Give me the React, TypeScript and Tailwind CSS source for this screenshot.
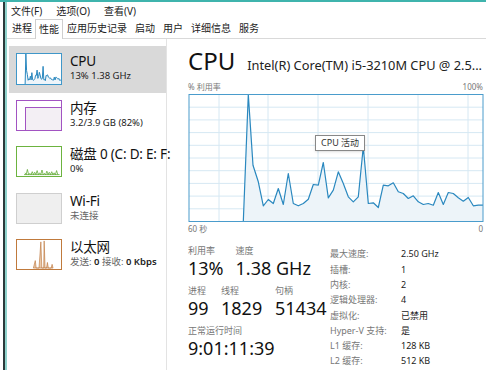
import React from "react";

const font = {
  fontFamily: '"Noto Sans", "Noto Sans CJK SC", sans-serif',
};

// CPU usage samples traced from the graph, in a 294x127 box
const cpuPoints: [number, number][] = [
  [54.3, 127], [59.3, 0], [64, 70.7], [69.3, 87.3], [74.3, 111.3], [79.3, 105],
  [84.3, 109], [89.3, 94], [94.3, 110], [99.3, 79], [104.3, 109], [109.3, 111.3],
  [114.3, 109], [119.3, 104.7], [124.3, 90], [129.3, 90.7], [134.3, 68],
  [139.3, 103.3], [144.3, 95.7], [149.3, 77.3], [154.3, 89], [159.3, 102.3],
  [164.3, 107.3], [169.3, 102.3], [174.3, 52.3], [179.3, 109], [184.3, 108.3],
  [189.3, 113], [194.3, 90.7], [199.3, 91.3], [204.3, 88.3], [209.3, 97.3],
  [214.3, 99], [219.3, 104], [224.3, 101.3], [229.3, 107.3], [234.3, 110],
  [239.3, 109], [244.3, 110.7], [249.3, 98], [254.3, 110], [259.3, 98],
  [264.3, 99], [269.3, 103.3], [274.3, 106.7], [279.3, 103], [284.3, 111.3],
  [289.3, 110.7], [294, 110.7],
];

const line = cpuPoints.map((p) => p.join(",")).join(" ");
const area = `${line} 294,127 54.3,127`;

function CpuThumb() {
  return (
    <svg width="46" height="32" viewBox="0 0 294 127" preserveAspectRatio="none" className="bg-white border border-[#3f97c9]">
      <polygon points={area} fill="#eef5fa" />
      <polyline points={line} fill="none" stroke="#2a88bf" strokeWidth="1" vectorEffect="non-scaling-stroke" />
    </svg>
  );
}

function MemThumb() {
  return (
    <div className="w-[46px] h-[31px] border border-[#a253c2] bg-white flex flex-col justify-end">
      <div className="ml-[8px] h-[23px] border-t border-l border-[#a253c2] bg-[#f3eff4]" />
    </div>
  );
}

function DiskThumb() {
  const bars = [4, 10, 3, 6, 5, 8, 4, 9, 3, 7, 5, 6, 4, 8];
  return (
    <svg width="46" height="31" viewBox="0 0 46 31" className="border border-[#6cb33f] bg-white">
      <polyline
        points={bars.map((b, i) => `${8 + i * 2.6},${30 - b * 0.6} ${9.3 + i * 2.6},29.5`).join(" ")}
        fill="none"
        stroke="#5aa62c"
        strokeWidth="0.8"
      />
      <line x1="7" y1="29.5" x2="45" y2="29.5" stroke="#5aa62c" strokeWidth="0.8" />
    </svg>
  );
}

function WifiThumb() {
  return <div className="w-[46px] h-[31px] border border-[#cfcfcf] bg-[#efefef]" />;
}

function EthThumb() {
  return (
    <svg width="46" height="31" viewBox="0 0 46 31" className="border border-[#c07a3c] bg-white">
      <polygon
        points="17,30 19,22 20,30 23,30 25,2 26,30 28,30 28.5,1 29.5,30 31,30 32,24 33,30 36,30 37,26 38,30"
        fill="#e9c9ab"
        stroke="#b86a2a"
        strokeWidth="0.6"
      />
    </svg>
  );
}

type Item = { thumb: React.ReactNode; title: string; sub: React.ReactNode; selected?: boolean };

const items: Item[] = [
  { thumb: <CpuThumb />, title: "CPU", sub: "13% 1.38 GHz", selected: true },
  { thumb: <MemThumb />, title: "内存", sub: "3.2/3.9 GB (82%)" },
  { thumb: <DiskThumb />, title: "磁盘 0 (C: D: E: F:", sub: "0%" },
  { thumb: <WifiThumb />, title: "Wi-Fi", sub: <span className="text-[#666]">未连接</span> },
  {
    thumb: <EthThumb />,
    title: "以太网",
    sub: (
      <span className="text-[#666]">
        发送: <b className="text-[#222] font-semibold">0</b> 接收: <b className="text-[#222] font-semibold">0 Kbps</b>
      </span>
    ),
  },
];

const specs: [string, string][] = [
  ["最大速度:", "2.50 GHz"],
  ["插槽:", "1"],
  ["内核:", "2"],
  ["逻辑处理器:", "4"],
  ["虚拟化:", "已禁用"],
  ["Hyper-V 支持:", "是"],
  ["L1 缓存:", "128 KB"],
  ["L2 缓存:", "512 KB"],
];

function Graph() {
  const rows = Array.from({ length: 9 }, (_, i) => (i + 1) * 12.7);
  const cols = [30, 79, 129, 179, 229, 279];
  return (
    <svg width="296" height="128" viewBox="-1 -0.5 296 128" className="block">
      {rows.map((y) => (
        <line key={y} x1="0" y1={y} x2="294" y2={y} stroke="#d6e8f3" strokeWidth="1" />
      ))}
      {cols.map((x) => (
        <line key={x} x1={x} y1="0" x2={x} y2="127" stroke="#d6e8f3" strokeWidth="1" />
      ))}
      <polygon points={area} fill="#edf4f9" />
      <polyline points={line} fill="none" stroke="#2a88bf" strokeWidth="1.2" strokeLinejoin="round" />
      <rect x="0" y="0" width="294" height="127" fill="none" stroke="#4a9ccc" strokeWidth="1" />
    </svg>
  );
}

function Stat({ label, value, w }: { label: string; value: string; w?: string }) {
  return (
    <div className={w}>
      <div className="text-[9px] leading-[12px] text-[#777]">{label}</div>
      <div className="text-[18px] leading-[22px] text-[#111]">{value}</div>
    </div>
  );
}

export default function App() {
  return (
    <div className="w-[486px] h-[370px] overflow-hidden bg-white text-[#1a1a1a] flex flex-col" style={font}>
      <div className="h-[2px] bg-[#3fb4ad] shrink-0" />
      <div className="flex flex-1 min-h-0">
        <div className="w-[3px] bg-white shrink-0" />
        <div className="w-[2px] bg-[#2b3a3a] shrink-0" />
        <div className="w-[2px] bg-[#8fd3cc] shrink-0" />
        <div className="flex-1 flex flex-col min-w-0">
          {/* menu */}
          <div className="h-[17px] flex items-center gap-[14px] pl-[4px] text-[10px] leading-none text-[#222]">
            <span>文件(F)</span>
            <span>选项(O)</span>
            <span>查看(V)</span>
          </div>
          {/* tabs */}
          <div className="h-[20px] flex items-end border-b border-[#d9d9d9] pl-[2px] text-[10px] leading-none text-[#222]">
            <span className="px-[3px] pb-[5px]">进程</span>
            <span className="px-[3px] pb-[5px] pt-[4px] border border-b-0 border-[#cfcfcf] bg-white -mb-px">性能</span>
            <span className="px-[4px] pb-[5px]">应用历史记录</span>
            <span className="px-[4px] pb-[5px]">启动</span>
            <span className="px-[4px] pb-[5px]">用户</span>
            <span className="px-[4px] pb-[5px]">详细信息</span>
            <span className="px-[4px] pb-[5px]">服务</span>
          </div>
          <div className="flex flex-1 min-h-0">
            {/* left list */}
            <div className="w-[160px] shrink-0 border-r border-[#e3e3e3] pt-[7px] pl-[2px]">
              {items.map((it) => (
                <div
                  key={it.title}
                  className={`h-[46.5px] flex items-start gap-[8px] pl-[7px] pt-[7px] ${it.selected ? "bg-[#d9d9d9]" : ""}`}
                >
                  <div className="shrink-0">{it.thumb}</div>
                  <div className="min-w-0 whitespace-nowrap">
                    <div className="text-[13.5px] leading-[16px] text-[#111] tracking-[-0.2px]">{it.title}</div>
                    <div className="text-[9.5px] leading-[14px] text-[#222]">{it.sub}</div>
                  </div>
                </div>
              ))}
            </div>
            {/* detail */}
            <div className="flex-1 min-w-0 pl-[21px] pr-[2px]">
              <div className="flex items-baseline gap-[12px] mt-[8px] whitespace-nowrap">
                <span className="text-[24px] leading-[28px] text-[#111]">CPU</span>
                <span className="text-[12.8px] text-[#222]">Intel(R) Core(TM) i5-3210M CPU @ 2.5...</span>
              </div>
              <div className="flex justify-between text-[8px] leading-[10px] text-[#777] mt-[7px] pr-[1px]">
                <span>% 利用率</span>
                <span>100%</span>
              </div>
              <div className="relative mt-[2px]">
                <Graph />
                <div className="absolute left-[127px] top-[41px] border border-[#888] bg-white px-[5px] text-[9px] leading-[14px] text-[#333] shadow-sm">
                  CPU 活动
                </div>
              </div>
              <div className="flex justify-between text-[8px] leading-[10px] text-[#777] mt-[2px] pr-[1px]">
                <span>60 秒</span>
                <span>0</span>
              </div>
              <div className="flex mt-[11px]">
                <div className="w-[142px] shrink-0">
                  <div className="flex gap-[12px]">
                    <Stat label="利用率" value="13%" />
                    <Stat label="速度" value="1.38 GHz" />
                  </div>
                  <div className="flex mt-[6px]">
                    <Stat label="进程" value="99" w="w-[33px]" />
                    <Stat label="线程" value="1829" w="w-[54px]" />
                    <Stat label="句柄" value="51434" />
                  </div>
                  <div className="mt-[6px]">
                    <Stat label="正常运行时间" value="9:01:11:39" />
                  </div>
                </div>
                <div className="flex-1 mt-[1px]">
                  {specs.map(([k, v]) => (
                    <div key={k} className="flex h-[15.3px] items-center text-[9px] leading-none whitespace-nowrap">
                      <span className="w-[71px] text-[#777]">{k}</span>
                      <span className="text-[#222]">{v}</span>
                    </div>
                  ))}
                </div>
              </div>
            </div>
          </div>
        </div>
      </div>
    </div>
  );
}
